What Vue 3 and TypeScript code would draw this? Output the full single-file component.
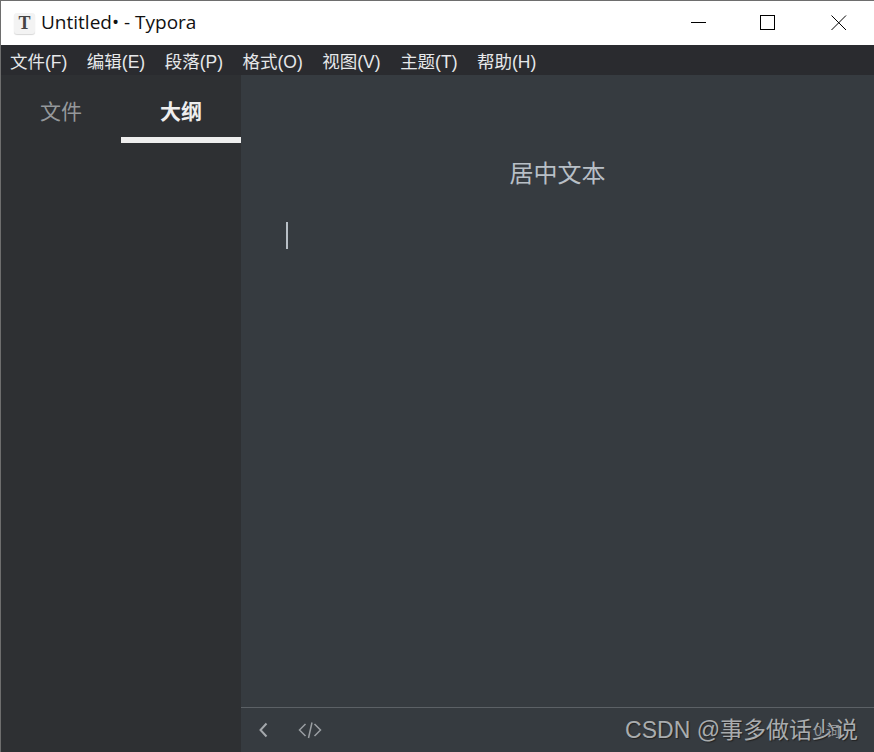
<template>
  <div class="window">
    <header class="titlebar">
      <div class="app-icon">
        <span class="app-icon-letter">T</span>
      </div>
      <span class="title">Untitled• - Typora</span>
      <div class="win-controls">
        <button class="win-btn">
          <svg width="16" height="16" viewBox="0 0 16 16"><path d="M0 7.5h15" stroke="#000" fill="none" /></svg>
        </button>
        <button class="win-btn">
          <svg width="18" height="16" viewBox="0 0 18 16"><rect x="0.5" y="0.5" width="14" height="14" stroke="#000" fill="none" /></svg>
        </button>
        <button class="win-btn">
          <svg width="16" height="16" viewBox="0 0 16 16"><path d="M0.5 0.5l14.5 14.5M15 0.5l-14.5 14.5" stroke="#000" fill="none" /></svg>
        </button>
      </div>
    </header>

    <nav class="menubar">
      <span v-for="item in menus" :key="item" class="menu-item">{{ item }}</span>
    </nav>

    <div class="body">
      <aside class="sidebar">
        <div class="tabs">
          <div class="tab">文件</div>
          <div class="tab active">大纲</div>
        </div>
      </aside>

      <main class="editor">
        <div class="doc">
          <p class="centered">居中文本</p>
          <div class="caret"></div>
        </div>
        <footer class="statusbar">
          <svg class="status-icon" width="12" height="16" viewBox="0 0 12 16">
            <path d="M8.5 1.5L2.5 8l6 6.5" stroke="#a4a8ac" stroke-width="2" fill="none" />
          </svg>
          <svg class="status-icon code" width="24" height="18" viewBox="0 0 24 18">
            <path d="M7.5 3L1.5 9l6 6M16.5 3l6 6-6 6M14 1.5l-3.5 15.5" stroke="#9a9ea2" stroke-width="1.5" fill="none" />
          </svg>
          <span class="watermark">CSDN @事多做话少说</span>
          <span class="counter">0 词</span>
        </footer>
      </main>
    </div>
  </div>
</template>

<script setup lang="ts">
const menus: string[] = ['文件(F)', '编辑(E)', '段落(P)', '格式(O)', '视图(V)', '主题(T)', '帮助(H)']
</script>

<style>
html,
body {
  margin: 0;
  height: 100%;
  overflow: hidden;
}
</style>

<style scoped>
.window {
  width: 874px;
  height: 752px;
  box-sizing: border-box;
  display: flex;
  flex-direction: column;
  border-top: 1px solid #6e6e6e;
  border-left: 1px solid #6e6e6e;
  font-family: "Liberation Sans", "Noto Sans CJK SC", sans-serif;
  overflow: hidden;
}

.titlebar {
  height: 44px;
  flex: none;
  display: flex;
  align-items: center;
  background: #fff;
  padding-left: 13px;
}

.app-icon {
  width: 21px;
  height: 21px;
  margin-right: 6px;
  border-radius: 3px;
  background: #f3f3f3;
  box-shadow: 0 1px 1px #d8d8d8;
  display: flex;
  align-items: center;
  justify-content: center;
}

.app-icon-letter {
  font-family: "Liberation Serif", serif;
  font-size: 18px;
  font-weight: bold;
  color: #444;
}

.title {
  font-family: "Open Sans", sans-serif;
  font-size: 19px;
  line-height: 24px;
  margin-top: -2px;
  color: #111;
  white-space: nowrap;
}

.win-controls {
  margin-left: auto;
  display: flex;
}

.win-btn {
  width: 70px;
  height: 44px;
  padding: 0;
  border: none;
  background: none;
  display: flex;
  align-items: center;
  justify-content: center;
}

.menubar {
  height: 30px;
  flex: none;
  display: flex;
  align-items: center;
  gap: 19.5px;
  padding-left: 9px;
  background: #2a2b2f;
}

.menu-item {
  font-size: 17.5px;
  color: #e6e8ea;
  white-space: nowrap;
}

.body {
  flex: 1;
  min-height: 0;
  display: flex;
}

.sidebar {
  width: 240px;
  flex: none;
  background: #2e3033;
}

.tabs {
  display: flex;
}

.tab {
  width: 120px;
  height: 68px;
  box-sizing: border-box;
  padding-top: 22px;
  text-align: center;
  font-size: 21px;
  line-height: 30px;
  color: #95989b;
}

.tab.active {
  color: #eeeeee;
  font-weight: bold;
  border-bottom: 6px solid #eeeeee;
}

.editor {
  flex: 1;
  min-width: 0;
  display: flex;
  flex-direction: column;
  background: #363b40;
}

.doc {
  flex: 1;
  padding: 81px 45px 0;
}

.centered {
  margin: 0;
  text-align: center;
  font-size: 24px;
  line-height: 36px;
  color: #b8bfc6;
}

.caret {
  width: 2px;
  height: 27px;
  margin-top: 30px;
  background: #b8bfc6;
}

.statusbar {
  height: 45px;
  flex: none;
  position: relative;
  display: flex;
  align-items: center;
  box-sizing: border-box;
  border-top: 1px solid #5c6166;
  padding-left: 17px;
}

.status-icon.code {
  margin-left: 28px;
}

.watermark {
  margin-left: auto;
  margin-right: 16px;
  margin-top: -5px;
  font-size: 23px;
  color: #a9acae;
  text-shadow: 1px 1px 1px #222;
  white-space: nowrap;
}

.counter {
  position: absolute;
  right: 34px;
  top: 12px;
  font-size: 14px;
  color: #8f9398;
}
</style>
